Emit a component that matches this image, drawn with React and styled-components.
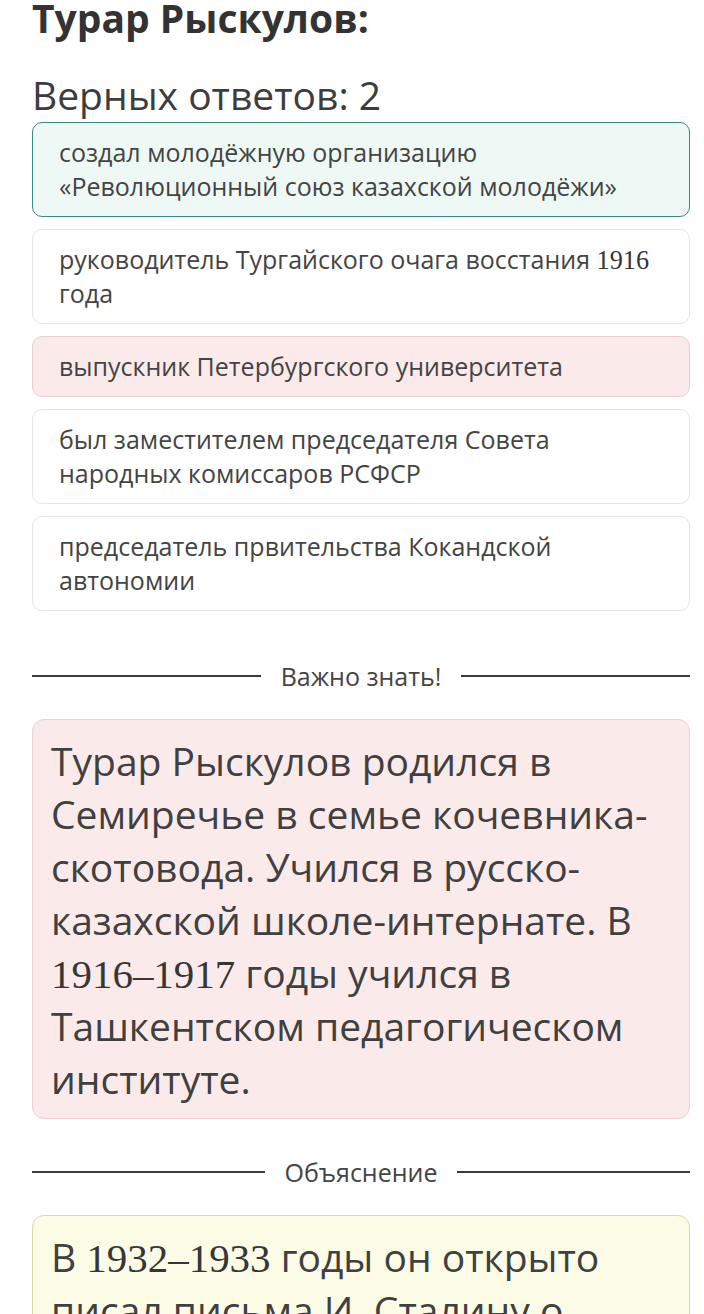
import React from 'react'
import styled, { createGlobalStyle } from 'styled-components'

const GlobalStyle = createGlobalStyle`
  body {
    margin: 0;
    background: #fff;
    font-family: 'Open Sans', 'Noto Sans', sans-serif;
    color: #3d3d3d;
  }
`

const options = [
    { text: 'создал молодёжную организацию «Революционный союз казахской молодёжи»', state: 'right' },
    { text: ['руководитель Тургайского очага восстания ', 1916, ' года'] },
    { text: 'выпускник Петербургского университета', state: 'wrong' },
    { text: 'был заместителем председателя Совета народных комиссаров РСФСР' },
    { text: 'председатель првительства Кокандской автономии' },
]

const renderText = (text) =>
    Array.isArray(text)
        ? text.map((part, i) => (typeof part === 'number' ? <Num key={i}>{part}</Num> : part))
        : text

const App = () => {
    return (
        <Page>
            <GlobalStyle />
            <Title>Турар Рыскулов:</Title>
            <Subtitle>Верных ответов: 2</Subtitle>
            <Options>
                {options.map((o, i) => (
                    <Option key={i} $state={o.state}>{renderText(o.text)}</Option>
                ))}
            </Options>

            <Divider $top={49}><span>Важно знать!</span></Divider>
            <InfoBox $tone="pink">
                Турар Рыскулов родился в Семиречье в семье кочевника-скотовода. Учился в русско-казахской школе-интернате. В <Num>1916–1917</Num> годы учился в Ташкентском педагогическом институте.
            </InfoBox>

            <Divider $top={37}><span>Объяснение</span></Divider>
            <InfoBox $tone="yellow">
                В <Num>1932–1933</Num> годы он открыто писал письма И. Сталину о голоде в Казахстане.
            </InfoBox>
        </Page>
    )
}

const Page = styled.div`
    padding: 0 14px 0 32px;
    height: 1325px;
    overflow: hidden;
    margin-top: -11px;
`

const Title = styled.h1`
    margin: 0;
    font-size: 39px;
    font-weight: 700;
    line-height: 58px;
    color: #333;
`

const Subtitle = styled.h2`
    margin: 25px 0 0;
    font-size: 39px;
    font-weight: 400;
    line-height: 46px;
    color: #3d3d3d;
`

const Options = styled.div`
    display: flex;
    flex-direction: column;
    gap: 12px;
    margin-top: 4px;
`

const Option = styled.div`
    border-radius: 10px;
    padding: 12px 26px 13px;
    font-size: 25px;
    line-height: 34px;
    color: #444;
    border: 1px solid ${p => p.$state === 'right' ? '#3d8b7d' : p.$state === 'wrong' ? '#ebcfcf' : '#e6e6e6'};
    background: ${p => p.$state === 'right' ? '#eef9f5' : p.$state === 'wrong' ? '#fbeaea' : '#fff'};
`

const Num = styled.span`
    font-family: 'Liberation Serif', serif;
    font-size: 1.05em;
    line-height: 1;
    color: #363636;
`

const Divider = styled.div`
    display: flex;
    align-items: center;
    gap: 20px;
    margin: ${p => p.$top}px 0 27px;
    font-size: 25px;
    line-height: 32px;
    color: #444;
    &::before, &::after {
        content: '';
        flex: 1;
        height: 2px;
        background: #3a3a3a;
    }
`

const InfoBox = styled.div`
    border-radius: 12px;
    padding: 14px 18px 13px;
    font-size: 39px;
    line-height: 53px;
    color: #404040;
    border: 1px solid ${p => p.$tone === 'pink' ? '#ecd2d2' : '#d9d9a4'};
    background: ${p => p.$tone === 'pink' ? '#fbeaea' : '#fcfce6'};
`

export default App
